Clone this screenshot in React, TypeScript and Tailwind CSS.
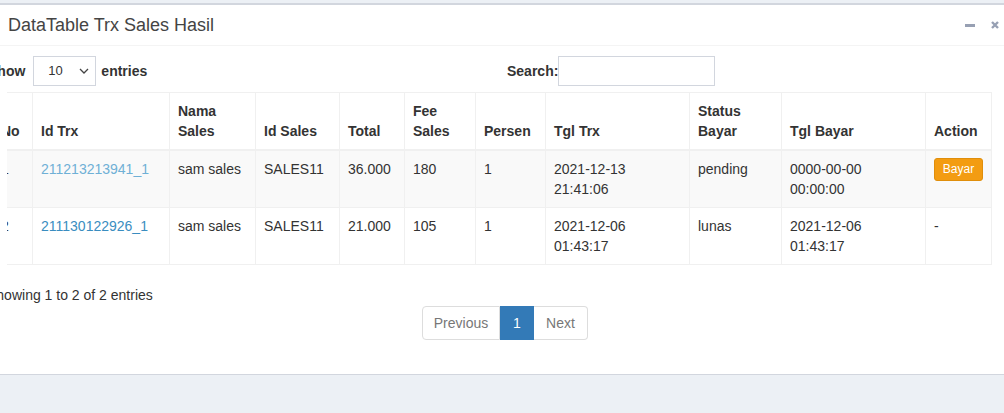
import React from "react";

const cols = [
  { label: ["No"], w: "w-[40px]" },
  { label: ["Id Trx"], w: "w-[137px]" },
  { label: ["Nama", "Sales"], w: "w-[86px]" },
  { label: ["Id Sales"], w: "w-[84px]" },
  { label: ["Total"], w: "w-[65px]" },
  { label: ["Fee", "Sales"], w: "w-[71px]" },
  { label: ["Persen"], w: "w-[70px]" },
  { label: ["Tgl Trx"], w: "w-[144px]" },
  { label: ["Status", "Bayar"], w: "w-[92px]" },
  { label: ["Tgl Bayar"], w: "w-[144px]" },
  { label: ["Action"], w: "w-[66px]" },
];

type Row = {
  no: string;
  id: string;
  idColor: string;
  nama: string;
  idSales: string;
  total: string;
  fee: string;
  persen: string;
  tgl: [string, string];
  status: string;
  bayar: [string, string];
  action: "button" | "dash";
  striped: boolean;
};

const rows: Row[] = [
  {
    no: "1",
    id: "211213213941_1",
    idColor: "text-[#6fb0d6]",
    nama: "sam sales",
    idSales: "SALES11",
    total: "36.000",
    fee: "180",
    persen: "1",
    tgl: ["2021-12-13", "21:41:06"],
    status: "pending",
    bayar: ["0000-00-00", "00:00:00"],
    action: "button",
    striped: true,
  },
  {
    no: "2",
    id: "211130122926_1",
    idColor: "text-[#3a8dc0]",
    nama: "sam sales",
    idSales: "SALES11",
    total: "21.000",
    fee: "105",
    persen: "1",
    tgl: ["2021-12-06", "01:43:17"],
    status: "lunas",
    bayar: ["2021-12-06", "01:43:17"],
    action: "dash",
    striped: false,
  },
];

const td = "border border-[#f0f0f0] px-[8px] pt-[8px] pb-[8px] align-top leading-[20px]";

export default function App() {
  return (
    <div
      className="w-[1004px] h-[413px] overflow-hidden bg-[#ecf0f5] pt-[3px] text-[14px] text-[#333]"
      style={{ fontFamily: '"Liberation Sans", Arial, Helvetica, sans-serif' }}
    >
      <div className="bg-white border-t-[2px] border-[#d2d6de] border-b border-b-[#d2d6de] h-[372px] overflow-hidden">
        {/* header */}
        <div className="h-[41px] border-b border-[#f4f4f4] flex items-center pl-[8px] pr-[5px]">
          <div className="text-[18px] text-[#444] leading-[20px] flex-1">DataTable Trx Sales Hasil</div>
          <div className="flex items-center gap-[16px]">
            <svg width="10" height="3" viewBox="0 0 10 3">
              <rect x="0" y="0" width="10" height="3" fill="#97a0b3" />
            </svg>
            <svg width="8" height="8" viewBox="0 0 8 8">
              <path d="M1 1 L7 7 M7 1 L1 7" stroke="#97a0b3" strokeWidth="2.4" />
            </svg>
          </div>
        </div>

        {/* body */}
        <div className="ml-[-15px] w-[1040px] pt-[10px]">
          <div className="grid grid-cols-2 h-[30px]">
            <div className="flex items-center font-bold pl-[3px]">
              <span>Show</span>
              <div className="ml-[8px] w-[63px] h-[30px] border border-[#d2d6de] flex items-center justify-between pl-[14px] pr-[6px] font-normal text-[13px]">
                <span>10</span>
                <svg width="10" height="6" viewBox="0 0 10 6">
                  <path d="M1 1 L5 5 L9 1" fill="none" stroke="#444" strokeWidth="1.3" />
                </svg>
              </div>
              <span className="ml-[5px]">entries</span>
            </div>
            <div className="flex items-center pl-[2px] font-bold">
              <span>Search:</span>
              <div className="ml-[0px] w-[157px] h-[30px] border border-[#d2d6de] bg-white" />
            </div>
          </div>

          <div className="mt-[6px] ml-[22px] overflow-hidden">
            <table className="ml-[-15px] table-fixed border-collapse w-[999px]">
              <thead>
                <tr>
                  {cols.map((c, i) => (
                    <th
                      key={i}
                      className={`${c.w} border border-[#f0f0f0] border-b-[2px] px-[8px] pt-[8px] pb-[8px] align-bottom text-left font-bold leading-[20px]`}
                    >
                      {c.label.map((l, j) => (
                        <div key={j}>{l}</div>
                      ))}
                    </th>
                  ))}
                </tr>
              </thead>
              <tbody>
                {rows.map((r, i) => (
                  <tr key={i} className={r.striped ? "bg-[#f9f9f9]" : "bg-white"}>
                    <td className={td}>{r.no}</td>
                    <td className={`${td} ${r.idColor}`}>{r.id}</td>
                    <td className={td}>{r.nama}</td>
                    <td className={td}>{r.idSales}</td>
                    <td className={td}>{r.total}</td>
                    <td className={td}>{r.fee}</td>
                    <td className={td}>{r.persen}</td>
                    <td className={td}>
                      <div>{r.tgl[0]}</div>
                      <div>{r.tgl[1]}</div>
                    </td>
                    <td className={td}>{r.status}</td>
                    <td className={td}>
                      <div>{r.bayar[0]}</div>
                      <div>{r.bayar[1]}</div>
                    </td>
                    <td className={td}>
                      {r.action === "button" ? (
                        <div className="mt-[-1px] w-[49px] h-[23px] rounded-[3px] bg-[#f39c12] border border-[#e08e0b] text-white text-[12px] leading-[21px] text-center">
                          Bayar
                        </div>
                      ) : (
                        <span>-</span>
                      )}
                    </td>
                  </tr>
                ))}
              </tbody>
            </table>
          </div>

          <div className="mt-[20px] leading-[20px] pl-[2px]">Showing 1 to 2 of 2 entries</div>

          <div className="flex justify-center mt-[1px]">
            <div className="flex h-[34px] leading-[20px]">
              <div className="w-[78px] flex items-center justify-center border border-[#ddd] rounded-l-[4px] text-[#777]">
                Previous
              </div>
              <div className="w-[34px] flex items-center justify-center bg-[#337ab7] border border-[#337ab7] text-white">
                1
              </div>
              <div className="w-[54px] flex items-center justify-center border border-[#ddd] border-l-0 rounded-r-[4px] text-[#777]">
                Next
              </div>
            </div>
          </div>
        </div>
      </div>
    </div>
  );
}
